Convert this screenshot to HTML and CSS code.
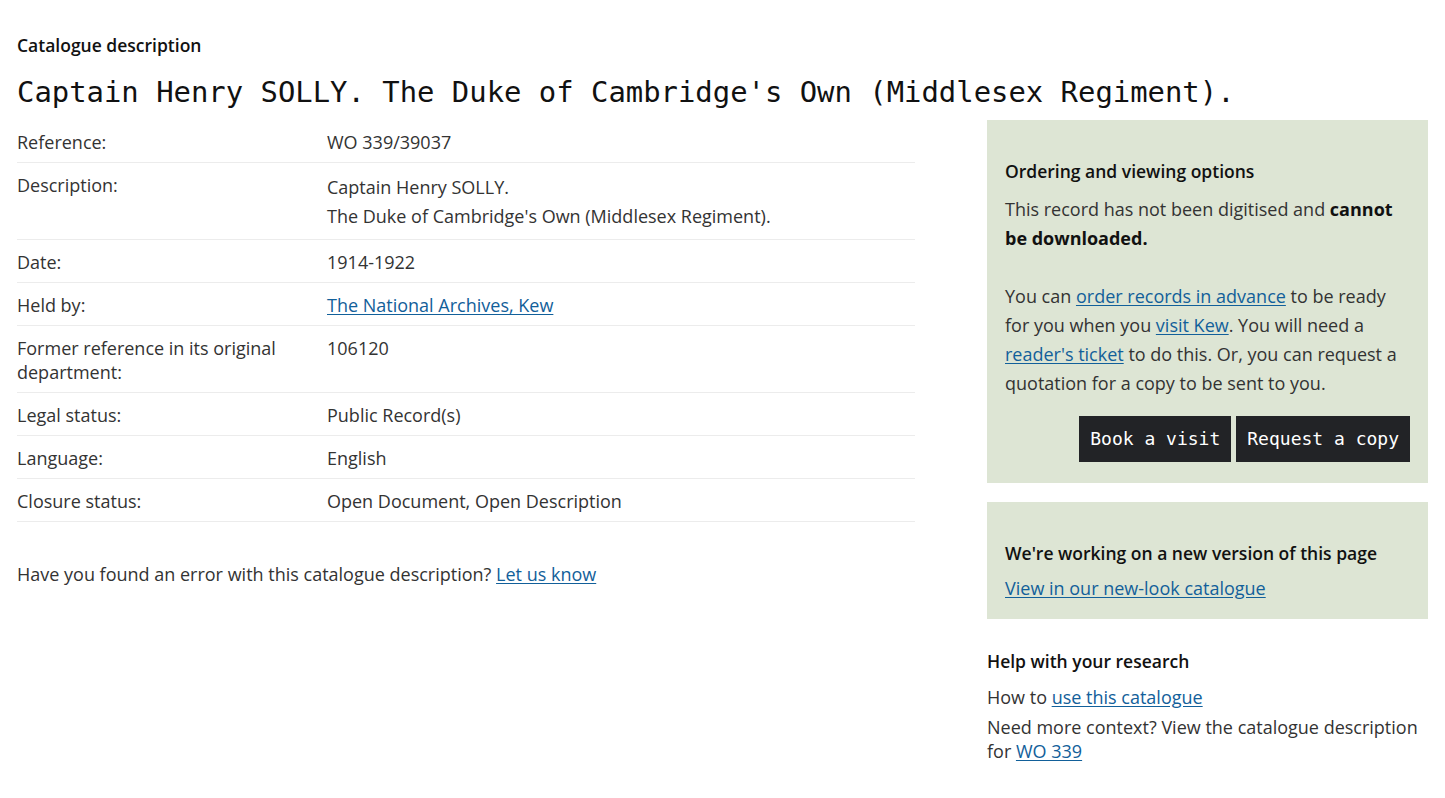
FILE: index.html
```html
<!DOCTYPE html>
<html lang="en">
<head>
    <meta charset="UTF-8">
    <meta name="viewport" content="width=device-width, initial-scale=1.0">
    <title>Catalogue description - WO 339/39037</title>
    <link rel="stylesheet" href="styles.css">
</head>
<body>

    <div class="page">
        <p class="kicker">Catalogue description</p>
        <h1>Captain Henry SOLLY. The Duke of Cambridge's Own (Middlesex Regiment).</h1>

        <div class="layout">

            <!-- Record details -->
            <div class="details">
                <table class="record">
                    <tr>
                        <th>Reference:</th>
                        <td>WO 339/39037</td>
                    </tr>
                    <tr>
                        <th>Description:</th>
                        <td class="desc">
                            <p>Captain Henry SOLLY.</p>
                            <p>The Duke of Cambridge's Own (Middlesex Regiment).</p>
                        </td>
                    </tr>
                    <tr>
                        <th>Date:</th>
                        <td>1914-1922</td>
                    </tr>
                    <tr>
                        <th>Held by:</th>
                        <td><a href="#">The National Archives, Kew</a></td>
                    </tr>
                    <tr>
                        <th>Former reference in its original department:</th>
                        <td>106120</td>
                    </tr>
                    <tr>
                        <th>Legal status:</th>
                        <td>Public Record(s)</td>
                    </tr>
                    <tr>
                        <th>Language:</th>
                        <td>English</td>
                    </tr>
                    <tr>
                        <th>Closure status:</th>
                        <td>Open Document, Open Description</td>
                    </tr>
                </table>

                <p class="feedback">Have you found an error with this catalogue description? <a href="#">Let us know</a></p>
            </div>

            <!-- Sidebar -->
            <aside class="sidebar">
                <div class="panel">
                    <h2>Ordering and viewing options</h2>
                    <p>This record has not been digitised and <strong>cannot be downloaded.</strong></p>
                    <p>You can <a href="#">order records in advance</a> to be ready for you when you <a href="#">visit Kew</a>. You will need a <a href="#">reader's ticket</a> to do this. Or, you can request a quotation for a copy to be sent to you.</p>
                    <div class="actions">
                        <a class="btn" href="#">Book a visit</a>
                        <a class="btn" href="#">Request a copy</a>
                    </div>
                </div>

                <div class="panel panel-new">
                    <h2>We're working on a new version of this page</h2>
                    <p><a href="#">View in our new-look catalogue</a></p>
                </div>

                <div class="help">
                    <h2>Help with your research</h2>
                    <p>How to <a href="#">use this catalogue</a></p>
                    <p>Need more context? View the catalogue description for <a href="#">WO 339</a></p>
                </div>
            </aside>

        </div>
    </div>

</body>
</html>
```

FILE: styles.css
```css
* {
    margin: 0;
    padding: 0;
    box-sizing: border-box;
}
body {
    font-family: 'Open Sans', 'Noto Sans', sans-serif;
    font-size: 18px;
    line-height: 24px;
    color: #333;
    background: #fff;
}
a {
    color: #12609a;
    text-decoration: underline;
    text-underline-offset: 2px;
}
.page {
    padding: 33px 17px 20px;
}
.kicker {
    font-size: 17.5px;
    font-weight: 600;
    color: #111;
    margin-bottom: 19px;
}
h1 {
    font-family: 'DejaVu Sans Mono', 'Liberation Mono', monospace;
    font-weight: normal;
    font-size: 28.9px;
    line-height: 32px;
    color: #111;
    margin-bottom: 12px;
}
.layout {
    display: grid;
    grid-template-columns: 898px 1fr;
    gap: 72px;
    align-items: start;
}

/* Record table */
.record {
    width: 100%;
    border-collapse: collapse;
}
.record tr {
    border-bottom: 1px solid #ececec;
}
.record th,
.record td {
    text-align: left;
    vertical-align: top;
    font-weight: normal;
    padding: 10px 0 8px;
}
.record th {
    width: 310px;
    padding-right: 20px;
}
.record .desc {
    line-height: 29px;
}
.feedback {
    margin-top: 40px;
}

/* Sidebar */
.panel {
    background: #dde5d4;
    padding: 39px 18px 21px;
    margin-bottom: 19px;
}
.panel h2,
.help h2 {
    font-size: 17.5px;
    font-weight: 600;
    line-height: 24px;
    color: #111;
}
.panel h2 {
    margin-bottom: 12px;
}
.panel p {
    line-height: 29px;
    margin-bottom: 29px;
}
.panel p strong {
    font-weight: 700;
    color: #111;
}
.actions {
    display: flex;
    justify-content: flex-end;
    gap: 5px;
    margin-top: -11px;
}
.btn {
    display: block;
    background: #222326;
    color: #fff;
    text-decoration: none;
    font-family: 'DejaVu Sans Mono', 'Liberation Mono', monospace;
    font-size: 18px;
    line-height: 24px;
    padding: 11px 11px;
}
.panel-new {
    padding-bottom: 16px;
}
.panel-new h2 {
    margin-bottom: 9px;
}
.panel-new p {
    margin-bottom: 0;
}
.help {
    padding-top: 11px;
}
.help h2 {
    margin-bottom: 12px;
}
.help p + p {
    margin-top: 6px;
}
```
